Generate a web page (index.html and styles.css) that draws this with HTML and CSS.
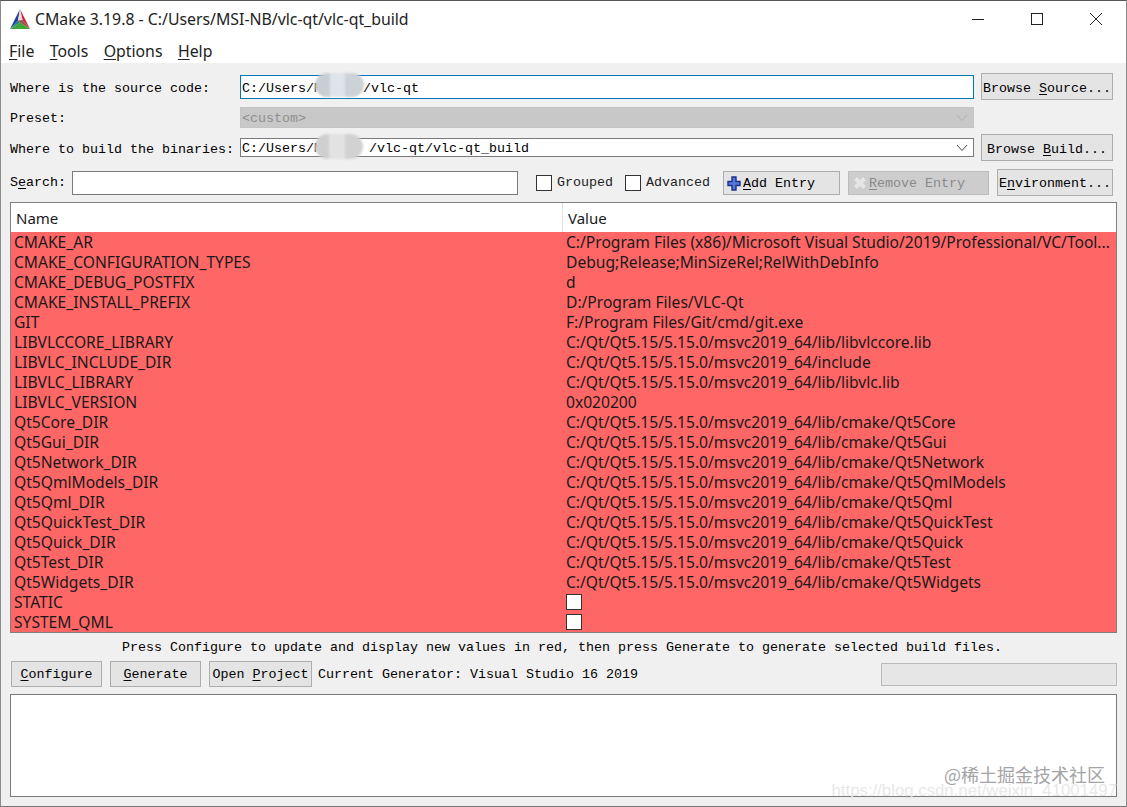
FILE: index.html
```html
<!DOCTYPE html>
<html lang="en">
<head>
<meta charset="utf-8">
<title>CMake 3.19.8</title>
<link rel="stylesheet" href="styles.css">
</head>
<body>
<div class="window">
  <header class="titlebar">
    <svg class="logo" viewBox="0 0 20 20" width="20" height="20">
      <polygon points="10,0 0,20 8,11.5" fill="#24409f"/>
      <polygon points="10,0 20,20 12.5,11" fill="#d3202c"/>
      <polygon points="10,0 8,11.5 12.5,11" fill="#e9d9dc"/>
      <polygon points="0,20 8,11.5 10,13.5" fill="#1b7f8f"/>
      <polygon points="0,20 20,20 10,13.5" fill="#3fa535"/>
      <polygon points="20,20 12.5,11 8,11.5 10,13.5" fill="#8f5a48"/>
    </svg>
    <span class="title">CMake 3.19.8 - C:/Users/MSI-NB/vlc-qt/vlc-qt_build</span>
    <div class="controls">
      <svg width="12" height="12" viewBox="0 0 12 12"><path d="M0 6.5H12" stroke="#222" fill="none"/></svg>
      <svg width="12" height="12" viewBox="0 0 12 12"><rect x=".5" y=".5" width="11" height="11" stroke="#222" fill="none"/></svg>
      <svg width="12" height="12" viewBox="0 0 12 12"><path d="M0 0L12 12M12 0L0 12" stroke="#222" fill="none"/></svg>
    </div>
  </header>
  <nav class="menubar">
    <span><u>F</u>ile</span><span><u>T</u>ools</span><span><u>O</u>ptions</span><span><u>H</u>elp</span>
  </nav>
  <main class="content">
    <div class="form-row row-source">
      <label class="form-label">Where is the source code:</label>
      <div class="field field-focus">C:/Users/M<i class="blur blur-a"></i><span class="after-blur-a">/vlc-qt</span></div>
      <button class="btn btn-side"><span>Browse <u>S</u>ource...</span></button>
    </div>
    <div class="form-row row-preset">
      <label class="form-label">Preset:</label>
      <div class="field field-disabled">&lt;custom&gt;<svg class="chev" width="12" height="8" viewBox="0 0 12 8"><path d="M1 1L6 6.5L11 1" stroke="#b0b0b0" fill="none"/></svg></div>
      <div class="btn-spacer"></div>
    </div>
    <div class="form-row row-build">
      <label class="form-label">Where to build the binaries:</label>
      <div class="field field-combo">C:/Users/M<i class="blur blur-b"></i><span class="after-blur-b">/vlc-qt/vlc-qt_build</span><svg class="chev" width="12" height="8" viewBox="0 0 12 8"><path d="M1 1L6 6.5L11 1" stroke="#444" fill="none"/></svg></div>
      <button class="btn btn-side"><span>Browse <u>B</u>uild...</span></button>
    </div>
    <div class="search-row">
      <label class="search-label">S<u>e</u>arch:</label>
      <div class="search-input"></div>
      <span class="check"></span><span class="check-label group">Grouped</span>
      <span class="check"></span><span class="check-label adv">Advanced</span>
      <button class="btn btn-add">
        <svg width="14" height="15" viewBox="0 0 14 15"><path d="M5 1H9V5.5H13V9.5H9V14H5V9.5H1V5.5H5Z" fill="#5478d8" stroke="#1c2f8c" stroke-width="1.4"/></svg><span><u>A</u>dd Entry</span>
      </button>
      <button class="btn btn-remove">
        <svg width="14" height="14" viewBox="0 0 14 14"><path d="M2.5 2.5L11.5 11.5M11.5 2.5L2.5 11.5" stroke="#e6e6e6" stroke-width="4"/></svg><span><u>R</u>emove Entry</span>
      </button>
      <button class="btn btn-env"><span>E<u>n</u>vironment...</span></button>
    </div>
    <section class="table">
      <div class="thead"><div class="th th-name">Name</div><div class="th">Value</div></div>
      <div class="tbody">
        <div class="tr"><span class="k">CMAKE_AR</span><span class="v">C:/Program Files (x86)/Microsoft Visual Studio/2019/Professional/VC/Tool...</span></div>
        <div class="tr"><span class="k">CMAKE_CONFIGURATION_TYPES</span><span class="v">Debug;Release;MinSizeRel;RelWithDebInfo</span></div>
        <div class="tr"><span class="k">CMAKE_DEBUG_POSTFIX</span><span class="v">d</span></div>
        <div class="tr"><span class="k">CMAKE_INSTALL_PREFIX</span><span class="v">D:/Program Files/VLC-Qt</span></div>
        <div class="tr"><span class="k">GIT</span><span class="v">F:/Program Files/Git/cmd/git.exe</span></div>
        <div class="tr"><span class="k">LIBVLCCORE_LIBRARY</span><span class="v">C:/Qt/Qt5.15/5.15.0/msvc2019_64/lib/libvlccore.lib</span></div>
        <div class="tr"><span class="k">LIBVLC_INCLUDE_DIR</span><span class="v">C:/Qt/Qt5.15/5.15.0/msvc2019_64/include</span></div>
        <div class="tr"><span class="k">LIBVLC_LIBRARY</span><span class="v">C:/Qt/Qt5.15/5.15.0/msvc2019_64/lib/libvlc.lib</span></div>
        <div class="tr"><span class="k">LIBVLC_VERSION</span><span class="v">0x020200</span></div>
        <div class="tr"><span class="k">Qt5Core_DIR</span><span class="v">C:/Qt/Qt5.15/5.15.0/msvc2019_64/lib/cmake/Qt5Core</span></div>
        <div class="tr"><span class="k">Qt5Gui_DIR</span><span class="v">C:/Qt/Qt5.15/5.15.0/msvc2019_64/lib/cmake/Qt5Gui</span></div>
        <div class="tr"><span class="k">Qt5Network_DIR</span><span class="v">C:/Qt/Qt5.15/5.15.0/msvc2019_64/lib/cmake/Qt5Network</span></div>
        <div class="tr"><span class="k">Qt5QmlModels_DIR</span><span class="v">C:/Qt/Qt5.15/5.15.0/msvc2019_64/lib/cmake/Qt5QmlModels</span></div>
        <div class="tr"><span class="k">Qt5Qml_DIR</span><span class="v">C:/Qt/Qt5.15/5.15.0/msvc2019_64/lib/cmake/Qt5Qml</span></div>
        <div class="tr"><span class="k">Qt5QuickTest_DIR</span><span class="v">C:/Qt/Qt5.15/5.15.0/msvc2019_64/lib/cmake/Qt5QuickTest</span></div>
        <div class="tr"><span class="k">Qt5Quick_DIR</span><span class="v">C:/Qt/Qt5.15/5.15.0/msvc2019_64/lib/cmake/Qt5Quick</span></div>
        <div class="tr"><span class="k">Qt5Test_DIR</span><span class="v">C:/Qt/Qt5.15/5.15.0/msvc2019_64/lib/cmake/Qt5Test</span></div>
        <div class="tr"><span class="k">Qt5Widgets_DIR</span><span class="v">C:/Qt/Qt5.15/5.15.0/msvc2019_64/lib/cmake/Qt5Widgets</span></div>
        <div class="tr"><span class="k">STATIC</span><span class="v"><i class="cell-check"></i></span></div>
        <div class="tr"><span class="k">SYSTEM_QML</span><span class="v"><i class="cell-check"></i></span></div>
      </div>
    </section>
    <p class="hint">Press Configure to update and display new values in red, then press Generate to generate selected build files.</p>
    <div class="action-row">
      <button class="btn btn-act"><span><u>C</u>onfigure</span></button>
      <button class="btn btn-act"><span><u>G</u>enerate</span></button>
      <button class="btn btn-open"><span>Open <u>P</u>roject</span></button>
      <span class="generator">Current Generator: Visual Studio 16 2019</span>
      <div class="progress"></div>
    </div>
    <div class="output">
      <span class="wm-url">https://blog.csdn.net/weixin_41001497</span>
      <span class="wm-cn">@稀土掘金技术社区</span>
    </div>
  </main>
</div>
</body>
</html>
```
FILE: styles.css
```css
* { box-sizing: border-box; }
html, body { margin: 0; padding: 0; background: #f0f0f0; }
body { width: 1127px; height: 807px; overflow: hidden; }
u { text-underline-offset: 2px; }
.window {
  width: 1127px; height: 807px;
  border-top: 1px solid #555;
  border-left: 1px solid #8a8a8a;
  border-right: 1px solid #8a8a8a;
  border-bottom: 1px solid #777;
  background: #f0f0f0;
  display: flex; flex-direction: column;
  font-family: "Liberation Mono", "DejaVu Sans Mono", monospace;
  font-size: 13.33px; color: #000;
}
.titlebar {
  height: 37px; background: #fff; display: flex; align-items: center;
  padding: 0 24px 0 9px;
  font-family: "Noto Sans", "Open Sans", sans-serif;
}
.logo { flex: none; margin-right: 5px; margin-top: -2px; }
.title { font-size: 15.84px; color: #222; margin-top: -2px; }
.controls { margin-left: auto; display: flex; gap: 47px; align-items: center; margin-top: -2px; }
.menubar {
  height: 25px; background: #fff; display: flex; padding: 0 0 0 8px; align-items: center;
  font-family: "Noto Sans", "Open Sans", sans-serif; font-size: 15.84px; gap: 15.4px; color: #222;
}
.content { flex: 1; display: flex; flex-direction: column; padding: 0 9px 0 9px; }
.form-row { display: flex; align-items: center; }
.row-source { margin-top: 10px; height: 27px; }
.row-preset { margin-top: 6px; height: 23px; }
.row-build { margin-top: 5px; height: 27px; }
.form-label { width: 230px; flex: none; padding-top: 3px; }
.row-preset .form-label { padding-top: 1px; }
.field {
  flex: none; width: 734px; background: #fff; border: 1px solid #7a7a7a; padding: 2px 0 0 1px;
  position: relative; display: flex; align-items: center; white-space: nowrap;
}
.field-focus { height: 24px; border-color: #0078b8; padding-top: 3px; }
.field-disabled { height: 21px; background: #c8c8c8; border-color: #c4c4c4; color: #8f8f8f; padding-top: 1px; }
.field-combo { height: 19px; }
.chev { position: absolute; right: 5px; top: 50%; margin-top: -4px; }
.blur {
  position: absolute; border-radius: 13px; filter: blur(1px);
  background: linear-gradient(90deg, #c9ced2 0 30%, #dde4ea 30% 62%, #cdd2d6 62% 100%);
}
.blur-a { left: 74px; width: 49px; top: -3px; height: 24px; }
.blur-b { left: 74px; width: 48px; top: -5px; height: 25px; background: linear-gradient(90deg, #cfcfcf 0 30%, #e2e2e2 30% 62%, #d2d2d2 62% 100%); }
.after-blur-a { margin-left: 41px; position: relative; }
.after-blur-b { margin-left: 47px; position: relative; }
.btn {
  font: inherit; color: #000; background: #e4e4e4; border: 1px solid #adadad; padding: 0;
  display: flex; align-items: center; justify-content: center; white-space: nowrap;
}
.btn-side { width: 132px; height: 27px; margin-left: 7px; flex: none; padding-top: 3px; }
.btn-spacer { width: 132px; margin-left: 7px; flex: none; }
.search-row { display: flex; align-items: center; height: 27px; margin-top: 8px; }
.search-label { width: 62px; flex: none; }
.search-input { width: 446px; height: 24px; background: #fff; border: 1px solid #7a7a7a; flex: none; margin-right: 18px; }
.check { width: 16px; height: 16px; background: #fff; border: 1px solid #333; flex: none; margin-right: 5px; }
.check-label { flex: none; color: #222; }
.group { margin-right: 10px; width: 58px; }
.adv { width: 73px; margin-right: 4px; }
.btn-add { width: 117px; height: 24px; justify-content: flex-start; padding: 1px 0 0 3px; flex: none; gap: 2px; }
.btn-remove { width: 141px; height: 24px; margin-left: 8px; justify-content: flex-start; padding: 1px 0 0 4px; flex: none; gap: 2px; background: #cdcdcd; border-color: #bdbdbd; color: #8a8a8a; }
.btn-env { width: 116px; height: 27px; margin-left: 8px; flex: none; padding-top: 1px; }
.table { margin-top: 6px; width: 1107px; height: 431px; border: 1px solid #7f7f7f; background: #ff6666; flex: none; font-family: "Noto Sans", "Open Sans", sans-serif; font-size: 15.6px; color: #1a1a1a; overflow: hidden; }
.thead { display: flex; height: 29px; background: #fff; }
.th { padding-left: 5px; display: flex; align-items: center; font-size: 15px; }
.th-name { width: 552px; border-right: 1px solid #e2e2e2; }
.tr { display: flex; height: 20px; align-items: center; white-space: nowrap; line-height: 20px; }
.k { width: 552px; padding-left: 3px; flex: none; }
.v { padding-left: 3px; flex: 1; display: flex; align-items: center; }
.cell-check { display: block; width: 16px; height: 16px; background: #fff; border: 1px solid #333; }
.hint { margin: 0; height: 28px; line-height: 28px; padding: 1px 3px 0 0; text-align: center; width: 1107px; flex: none; }
.action-row { display: flex; align-items: center; height: 26px; flex: none; }
.btn-act { width: 91px; height: 26px; margin-left: 1px; margin-right: 7px; flex: none; padding-top: 1px; }
.btn-open { width: 103px; height: 26px; flex: none; margin-left: 1px; padding-top: 1px; }
.generator { margin-left: 6px; flex: none; padding-top: 1px; }
.progress { margin-left: auto; width: 236px; height: 23px; background: #e6e6e6; border: 1px solid #b9b9b9; }
.output { margin-top: 7px; width: 1107px; height: 103px; background: #fff; border: 1px solid #7a7a7a; position: relative; }
.wm-cn { position: absolute; right: 11px; top: 68px; font-family: "Noto Sans CJK SC", sans-serif; font-size: 18px; line-height: 22px; color: #a4a4a4; white-space: nowrap; }
.wm-url { position: absolute; right: -1px; top: 90px; font-family: "Liberation Sans", sans-serif; font-size: 16.8px; color: #e8e8e8; white-space: nowrap; line-height: 12px; }
```
